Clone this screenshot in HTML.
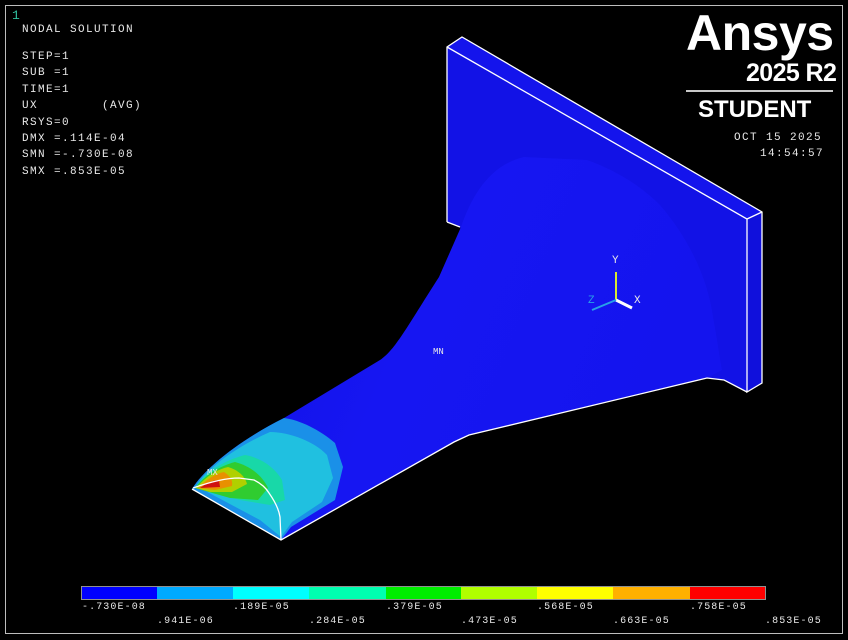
<!DOCTYPE html>
<html><head><meta charset="utf-8"><style>
body{margin:0;background:#000;width:848px;height:640px;overflow:hidden;position:relative;font-family:"Liberation Mono",monospace}
.t{position:absolute;color:#e8e8e8;font-size:11px;white-space:pre;line-height:1;letter-spacing:1.4px}
.frame{position:absolute;left:5px;top:5px;width:836px;height:627px;border:1px solid #bdbdbd}
.a{position:absolute;color:#fff;font-family:"Liberation Sans",sans-serif;font-weight:bold;white-space:nowrap;line-height:1}
.s{font-size:10px;letter-spacing:1.1px}
</style></head><body>
<div class="frame"></div>
<svg width="848" height="640" style="position:absolute;left:0;top:0">
<defs>
<linearGradient id="bd" x1="0" y1="0" x2="1" y2="0.3">
<stop offset="0" stop-color="#1010e0"/><stop offset="0.5" stop-color="#1616f2"/><stop offset="1" stop-color="#1414ee"/></linearGradient>
</defs>
<polygon points="447,47 462,37 762,212 747,219" fill="#1414ec"/>
<polygon points="747,219 762,212 762,383 747,392" fill="#1010dc"/>
<polygon points="447,47 747,219 747,392 724,380 707,378 470,300 460,227 447,222" fill="#1212e6"/>
<path d="M192,489 C205,468 240,440 284,418 L380,360 C395,350 405,330 439,277 L461,227 C472,195 490,165 524,157 L587,160 C615,170 640,185 660,205 C690,240 708,280 713,317 C718,345 720,360 722,370 L707,378 L469,435 L454,442 L281,540 Z" fill="url(#bd)"/>
<path d="M192,489 C205,468 240,440 284,418 C300,420 320,430 335,443 L343,467 L335,500 L291,527 L281,540 Z" fill="#1a90e8"/>
<path d="M196,486 C210,465 240,445 270,432 C290,432 315,442 327,455 L333,478 L322,502 L292,522 L281,537 L260,520 Z" fill="#20c0e0"/>
<path d="M195,488 C205,472 225,460 245,455 C262,458 275,468 282,480 L285,500 L270,505 L240,500 Z" fill="#18d8a8"/>
<path d="M195,488 C205,475 220,466 235,462 C250,466 262,475 268,488 L258,500 L230,498 Z" fill="#30cc30"/>
<path d="M196,488 C205,478 215,470 228,467 C238,470 245,476 247,484 L232,492 L210,492 Z" fill="#b0d000"/>
<path d="M198,488 C206,480 214,474 224,472 C230,476 233,480 232,486 L215,490 Z" fill="#e89000"/>
<path d="M200,488 C207,483 213,480 219,480 L220,487 Z" fill="#d01010"/>
<g fill="none" stroke="#fff" stroke-width="1.3">
<polyline points="447,222 447,47 462,37 762,212 762,383 747,392 747,219 447,47"/>
<line x1="747" y1="219" x2="762" y2="212"/>
<polyline points="447,222 460,227"/>
<polyline points="747,392 724,380 707,378 469,435 454,442 281,540 192,489"/>
<path d="M193,488 C210,482 225,478 239,478 L254,480 C262,484 266,488 269,493 C276,503 279,510 280,517 L281,540"/>
</g>
<line x1="616" y1="300" x2="616" y2="272" stroke="#d8e830" stroke-width="2"/>
<line x1="616" y1="300" x2="632" y2="308" stroke="#fff" stroke-width="3"/>
<line x1="616" y1="300" x2="592" y2="310" stroke="#28a0e8" stroke-width="2"/>
</svg>
<div class="t" style="left:12px;top:9px;color:#30c0a0;font-size:13px;letter-spacing:0">1</div>
<div class="t" style="left:22px;top:25px">NODAL SOLUTION</div>
<div class="t" style="left:22px;top:49px;line-height:16.4px">STEP=1
SUB =1
TIME=1
UX        (AVG)
RSYS=0
DMX =.114E-04
SMN =-.730E-08
SMX =.853E-05</div>
<div class="a" style="left:686px;top:8px;font-size:50px;letter-spacing:-0.5px">Ansys</div>
<div class="a" style="left:746px;top:61px;font-size:25px;letter-spacing:-0.6px">2025 R2</div>
<div style="position:absolute;left:686px;top:90px;width:147px;height:2px;background:#c8c8c8"></div>
<div class="a" style="left:698px;top:98px;font-size:24px">STUDENT</div>
<div class="t" style="left:734px;top:133px">OCT 15 2025</div>
<div class="t" style="left:760px;top:149px">14:54:57</div>
<div class="t" style="left:433px;top:348px;font-size:9px;letter-spacing:0">MN</div>
<div class="t" style="left:207px;top:469px;font-size:9px;letter-spacing:0">MX</div>
<div class="t" style="left:612px;top:256px;letter-spacing:0">Y</div>
<div class="t" style="left:634px;top:296px;letter-spacing:0">X</div>
<div class="t" style="left:588px;top:296px;color:#28a0e8;letter-spacing:0">Z</div>
<div style="position:absolute;left:81px;top:586px;width:683px;height:12px;border:1px solid #909090;display:flex">
<div style="flex:75;background:#0000ff"></div><div style="flex:76;background:#00aaff"></div><div style="flex:76;background:#00ffff"></div><div style="flex:77;background:#00ffb0"></div><div style="flex:75;background:#00ee00"></div><div style="flex:76;background:#b0ff00"></div><div style="flex:76;background:#ffff00"></div><div style="flex:77;background:#ffb000"></div><div style="flex:75;background:#ff0000"></div></div>
<div class="t s" style="left:82px;top:603px">-.730E-08</div>
<div class="t s" style="left:233px;top:603px">.189E-05</div>
<div class="t s" style="left:386px;top:603px">.379E-05</div>
<div class="t s" style="left:537px;top:603px">.568E-05</div>
<div class="t s" style="left:690px;top:603px">.758E-05</div>
<div class="t s" style="left:157px;top:617px">.941E-06</div>
<div class="t s" style="left:309px;top:617px">.284E-05</div>
<div class="t s" style="left:461px;top:617px">.473E-05</div>
<div class="t s" style="left:613px;top:617px">.663E-05</div>
<div class="t s" style="left:765px;top:617px">.853E-05</div>
</body></html>
